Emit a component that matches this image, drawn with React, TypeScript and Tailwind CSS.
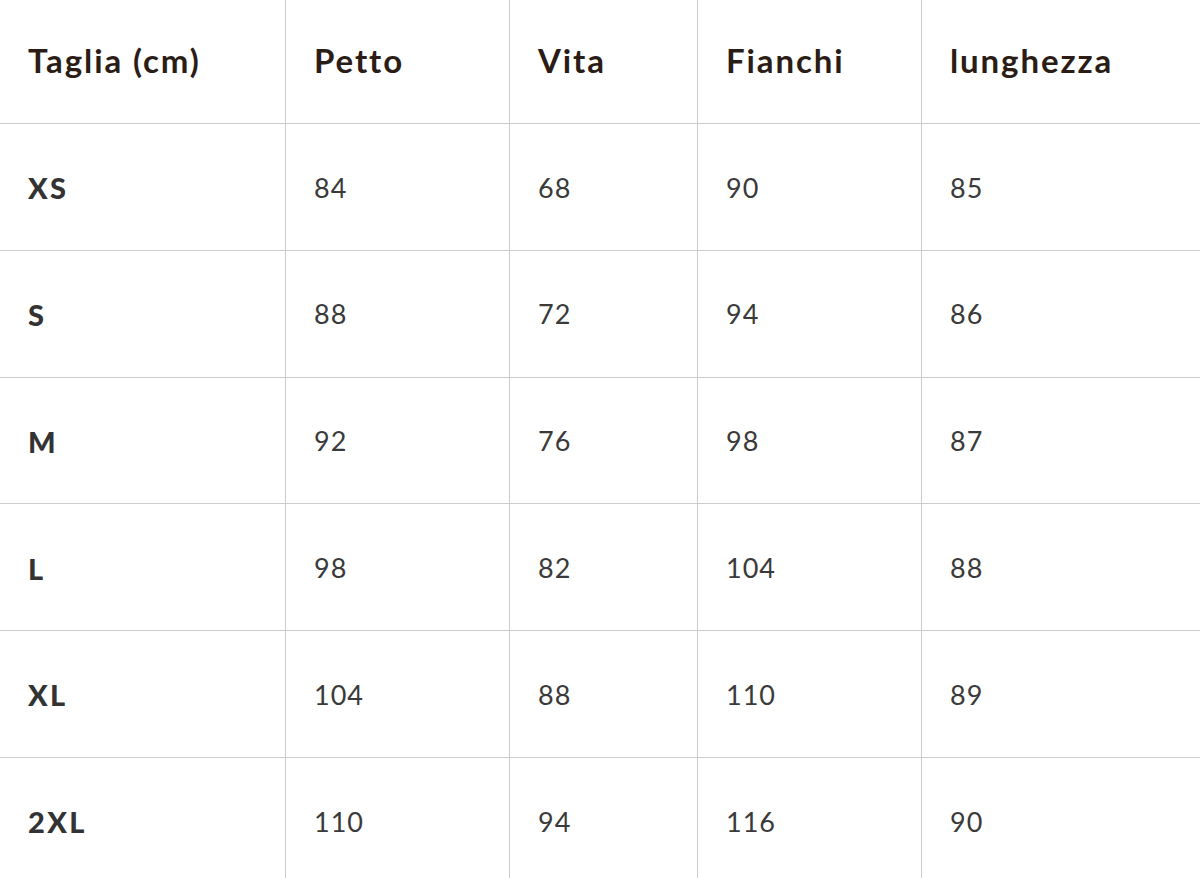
import React from 'react';

const headers = ['Taglia (cm)', 'Petto', 'Vita', 'Fianchi', 'lunghezza'];

const rows: (string | number)[][] = [
  ['XS', 84, 68, 90, 85],
  ['S', 88, 72, 94, 86],
  ['M', 92, 76, 98, 87],
  ['L', 98, 82, 104, 88],
  ['XL', 104, 88, 110, 89],
  ['2XL', 110, 94, 116, 90],
];

const colWidths = ['w-[286px]', 'w-[224px]', 'w-[188px]', 'w-[224px]', 'flex-1'];

export default function App() {
  return (
    <div className="h-[878px] w-[1200px] overflow-hidden bg-white font-['Lato',sans-serif]">
      {/* Header row */}
      <div className="flex h-[124px] border-b border-[#cccccc]">
        {headers.map((h, i) => (
          <div
            key={h}
            className={`${colWidths[i]} flex items-center pl-[28px] pb-[2px] ${i < 4 ? 'border-r border-[#cccccc]' : ''}`}
          >
            <span className="text-[33px] font-bold text-[#2b1d16] tracking-[1.9px]">{h}</span>
          </div>
        ))}
      </div>

      {/* Body rows */}
      {rows.map((row, r) => (
        <div key={r} className="flex h-[126.8px] border-b border-[#cccccc]">
          {row.map((cell, i) => (
            <div
              key={i}
              className={`${colWidths[i]} flex items-center pl-[28px] pt-[2px] ${i < 4 ? 'border-r border-[#cccccc]' : ''}`}
            >
              {i === 0 ? (
                <span className="text-[29px] font-black text-[#333333] tracking-[2.4px]">{cell}</span>
              ) : (
                <span className="text-[27px] font-normal text-[#3a3a3a] tracking-[1px]">{cell}</span>
              )}
            </div>
          ))}
        </div>
      ))}
    </div>
  );
}
